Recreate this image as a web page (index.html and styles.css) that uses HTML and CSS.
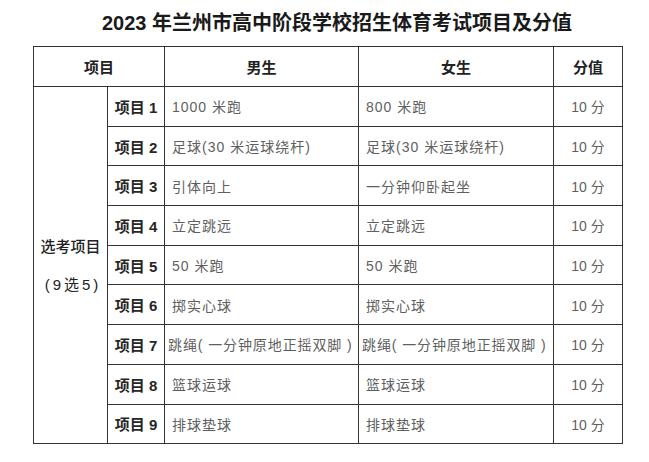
FILE: index.html
```html
<!DOCTYPE html>
<html lang="zh-CN">
<head>
<meta charset="utf-8">
<title>2023年兰州市高中阶段学校招生体育考试项目及分值</title>
<link rel="stylesheet" href="styles.css">
</head>
<body>
<h1 class="title">2023 年兰州市高中阶段学校招生体育考试项目及分值</h1>
<table class="grid">
  <colgroup>
    <col class="c-group">
    <col class="c-item">
    <col class="c-male">
    <col class="c-female">
    <col class="c-score">
  </colgroup>
  <thead>
    <tr class="head">
      <th colspan="2">项目</th>
      <th>男生</th>
      <th>女生</th>
      <th>分值</th>
    </tr>
  </thead>
  <tbody>
    <tr>
      <td class="group" rowspan="9"><p class="g1">选考项目</p><p class="g2">(9选5)</p></td>
      <td class="item">项目 1</td><td class="txt">1000 米跑</td><td class="txt">800 米跑</td><td class="score">10 分</td>
    </tr>
    <tr><td class="item">项目 2</td><td class="txt">足球(30 米运球绕杆)</td><td class="txt">足球(30 米运球绕杆)</td><td class="score">10 分</td></tr>
    <tr><td class="item">项目 3</td><td class="txt">引体向上</td><td class="txt">一分钟仰卧起坐</td><td class="score">10 分</td></tr>
    <tr><td class="item">项目 4</td><td class="txt">立定跳远</td><td class="txt">立定跳远</td><td class="score">10 分</td></tr>
    <tr><td class="item">项目 5</td><td class="txt">50 米跑</td><td class="txt">50 米跑</td><td class="score">10 分</td></tr>
    <tr><td class="item">项目 6</td><td class="txt">掷实心球</td><td class="txt">掷实心球</td><td class="score">10 分</td></tr>
    <tr><td class="item">项目 7</td><td class="txt tight">跳绳( 一分钟原地正摇双脚 )</td><td class="txt tight">跳绳( 一分钟原地正摇双脚 )</td><td class="score">10 分</td></tr>
    <tr><td class="item">项目 8</td><td class="txt">篮球运球</td><td class="txt">篮球运球</td><td class="score">10 分</td></tr>
    <tr><td class="item">项目 9</td><td class="txt">排球垫球</td><td class="txt">排球垫球</td><td class="score">10 分</td></tr>
  </tbody>
</table>
</body>
</html>
```
FILE: styles.css
```css
html, body {
  margin: 0;
  padding: 0;
  background: #ffffff;
}
body {
  width: 649px;
  height: 462px;
  overflow: hidden;
  font-family: "Liberation Sans", "Noto Sans CJK SC", sans-serif;
  color: #222;
}
.title {
  margin: 0;
  height: 46px;
  line-height: 46px;
  padding-left: 25px;
  text-align: center;
  font-size: 20px;
  font-weight: 700;
  color: #1a1a1a;
}
.grid {
  margin-left: 33px;
  width: 589px;
  table-layout: fixed;
  border-collapse: collapse;
}
.c-group { width: 74px; }
.c-item { width: 57px; }
.c-male { width: 194px; }
.c-female { width: 195px; }
.c-score { width: 69px; }
.grid th, .grid td {
  border: 1px solid #333;
  padding: 0;
  vertical-align: middle;
}
.head th {
  height: 39px;
  font-size: 15px;
  font-weight: 700;
  color: #222;
  text-align: center;
}
.grid tbody tr {
  height: 39.7px;
}
.group {
  text-align: center;
  font-size: 15px;
  color: #222;
}
.group p {
  margin: 0;
  line-height: 19px;
}
.g1 { margin-bottom: 19px !important; font-weight: 500; }
.g2 { letter-spacing: 3px; padding-left: 5px; }
.item {
  text-align: center;
  font-size: 15px;
  font-weight: 700;
  color: #262626;
}
.txt {
  padding-left: 7px !important;
  font-size: 14px;
  letter-spacing: 1px;
  color: #5f5f5f;
  white-space: nowrap;
}
.tight {
  padding-left: 3px !important;
  letter-spacing: 0.9px;
}
.score {
  text-align: center;
  font-size: 14px;
  color: #5f5f5f;
}
```
